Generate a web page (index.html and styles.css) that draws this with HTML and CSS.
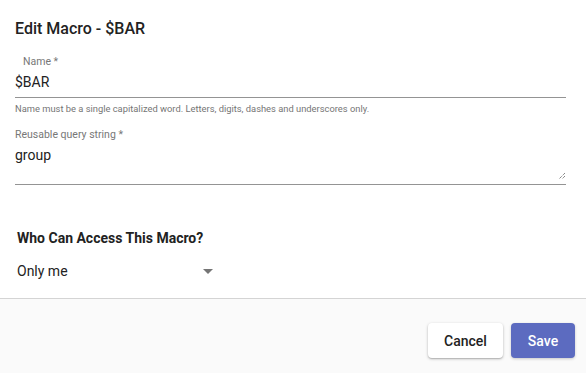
FILE: index.html
```html
<!DOCTYPE html>
<html>
<head>
<meta charset="utf-8">
<link rel="stylesheet" href="styles.css">
</head>
<body>
<div class="dialog">
  <div class="content">
    <h2 class="title">Edit Macro - $BAR</h2>
    <div class="field">
      <label class="label label-indent">Name *</label>
      <div class="input">$BAR</div>
      <div class="helper">Name must be a single capitalized word. Letters, digits, dashes and underscores only.</div>
    </div>
    <div class="field field-query">
      <label class="label">Reusable query string *</label>
      <div class="input textarea">
        <span>group</span>
        <svg class="resize" width="8" height="8" viewBox="0 0 8 8"><path d="M7 1 L1 7 M7 4 L4 7" stroke="#555" stroke-width="1" fill="none" stroke-dasharray="1 1"/></svg>
      </div>
    </div>
    <h3 class="subtitle">Who Can Access This Macro?</h3>
    <div class="select">
      <span>Only me</span>
      <svg class="caret" width="10" height="5" viewBox="0 0 10 5"><path d="M0 0 L10 0 L5 5 Z" fill="#757575"/></svg>
    </div>
  </div>
  <div class="actions">
    <button class="btn btn-cancel">Cancel</button>
    <button class="btn btn-save">Save</button>
  </div>
</div>
</body>
</html>
```
FILE: styles.css
```css
html, body {
  margin: 0;
  padding: 0;
  background: #fff;
}
body {
  font-family: Roboto, "Liberation Sans", sans-serif;
  color: #222;
  width: 586px;
  height: 373px;
  overflow: hidden;
}
.dialog {
  display: flex;
  flex-direction: column;
  height: 373px;
}
.content {
  padding: 0 20px 0 15px;
  display: flex;
  flex-direction: column;
}
.title {
  margin: 17px 0 0;
  font-size: 16px;
  font-weight: 500;
  line-height: 24px;
  color: #222;
}
.field {
  display: flex;
  flex-direction: column;
  margin-top: 14px;
}
.label {
  font-size: 10.5px;
  line-height: 14px;
  color: #777;
}
.label-indent {
  padding-left: 8px;
}
.input {
  font-size: 14px;
  line-height: 20px;
  color: #222;
  padding: 3px 0 5px;
  border-bottom: 1px solid #949494;
}
.helper {
  margin-top: 5px;
  font-size: 9.35px;
  line-height: 12px;
  color: #757575;
}
.field-query {
  margin-top: 13px;
}
.textarea {
  display: flex;
  align-items: flex-start;
  justify-content: space-between;
  height: 38px;
  padding: 3px 0 1px;
}
.resize {
  align-self: flex-end;
  margin-bottom: 3px;
}
.subtitle {
  margin: 43px 0 0 2px;
  font-size: 14px;
  font-weight: 700;
  line-height: 20px;
  color: #222;
}
.select {
  margin: 13px 0 0 2px;
  width: 196px;
  display: flex;
  align-items: center;
  justify-content: space-between;
  font-size: 14px;
  line-height: 20px;
  color: #222;
}
.actions {
  margin-top: 17px;
  flex: 1;
  border-top: 1px solid #d4d4d4;
  background: #fafafa;
  display: flex;
  justify-content: flex-end;
  align-items: flex-start;
  gap: 8px;
  padding: 24px 11px 0 0;
}
.btn {
  font-family: Roboto, "Liberation Sans", sans-serif;
  font-size: 14px;
  font-weight: 500;
  height: 35px;
  border: none;
  border-radius: 4px;
  padding: 0 16px;
  cursor: pointer;
}
.btn-cancel {
  background: #fff;
  color: #222;
  box-shadow: 0 1px 3px rgba(0,0,0,0.25), 0 1px 1px rgba(0,0,0,0.12);
  width: 75px;
}
.btn-save {
  background: #5c6bc0;
  color: #fff;
  width: 64px;
  box-shadow: 0 1px 3px rgba(0,0,0,0.2);
}
```
